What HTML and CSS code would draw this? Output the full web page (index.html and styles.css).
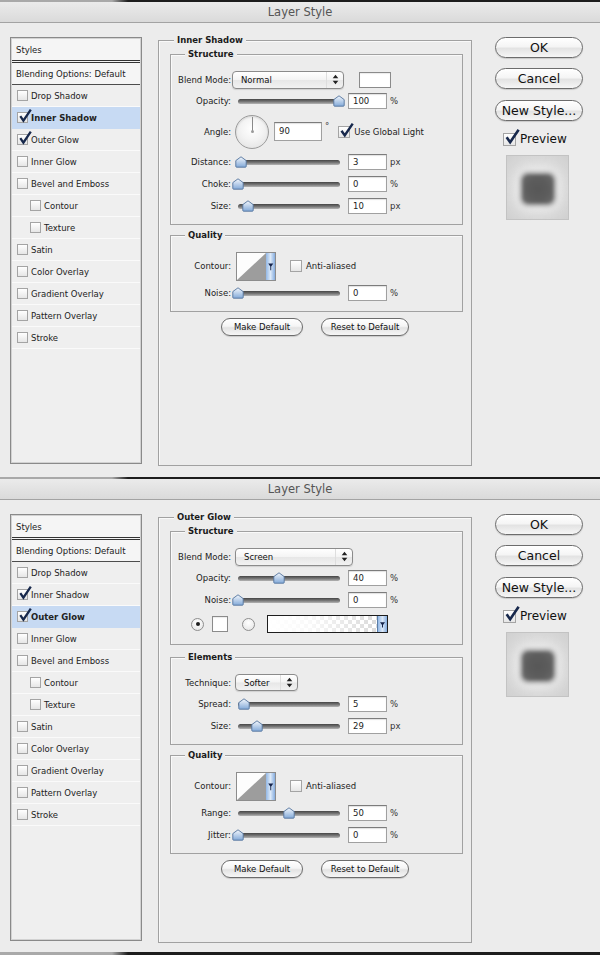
FILE: index.html
```html
<!DOCTYPE html>
<html lang="en">
<head>
<meta charset="utf-8">
<title>Layer Style</title>
<link rel="stylesheet" href="styles.css">
</head>
<body>
<svg class="defs" aria-hidden="true"><defs>
<linearGradient id="thumbg" x1="0" y1="0" x2="0" y2="1"><stop offset="0" stop-color="#f4f8fd"/><stop offset="1" stop-color="#82a9d8"/></linearGradient>
<linearGradient id="stripg" x1="0" y1="0" x2="1" y2="0"><stop offset="0" stop-color="#93b8e6"/><stop offset=".5" stop-color="#dce9f8"/><stop offset="1" stop-color="#86addf"/></linearGradient>
</defs></svg>

<!-- ============ DIALOG 1 : INNER SHADOW ============ -->
<div class="dialog">
  <div class="topline"></div>
  <div class="titlebar">Layer Style</div>
  <div class="body">
    <div class="sidebar">
      <div class="hdr styles">Styles</div>
      <div class="hdr blend">Blending Options: Default</div>
      <div class="item"><span class="cb"></span>Drop Shadow</div>
      <div class="item sel"><span class="cb"><svg class="ck" viewBox="0 0 14 14"><path d="M2.3 7.2 5.4 11.6 12.8 .6"/></svg></span>Inner Shadow</div>
      <div class="item"><span class="cb"><svg class="ck" viewBox="0 0 14 14"><path d="M2.3 7.2 5.4 11.6 12.8 .6"/></svg></span>Outer Glow</div>
      <div class="item"><span class="cb"></span>Inner Glow</div>
      <div class="item"><span class="cb"></span>Bevel and Emboss</div>
      <div class="item sub"><span class="cb"></span>Contour</div>
      <div class="item sub"><span class="cb"></span>Texture</div>
      <div class="item"><span class="cb"></span>Satin</div>
      <div class="item"><span class="cb"></span>Color Overlay</div>
      <div class="item"><span class="cb"></span>Gradient Overlay</div>
      <div class="item"><span class="cb"></span>Pattern Overlay</div>
      <div class="item"><span class="cb"></span>Stroke</div>
    </div>

    <div class="group outer">
      <div class="gtitle">Inner Shadow</div>
      <div class="group inner first">
        <div class="gtitle">Structure</div>
        <div class="rows">
          <div class="row r21">
            <span class="lbl">Blend Mode:</span>
            <span class="select blend1"><span class="val">Normal</span><span class="arr"><svg viewBox="0 0 7 11" width="7" height="11"><path d="M3.5 .8 6.3 4.3H.7Z M.7 6.7H6.3L3.5 10.2Z"/></svg></span></span>
            <span class="swatch"></span>
          </div>
          <div class="row">
            <span class="lbl">Opacity:</span>
            <span class="slider"><span class="track"></span><svg class="thumb" viewBox="0 0 12 12" style="left:101px"><path d="M6 .8 11.2 4.6V10.4Q11.2 11.2 10.4 11.2H1.6Q.8 11.2 .8 10.4V4.6Z"/></svg></span>
            <span class="num">100</span><span class="unit">%</span>
          </div>
          <div class="row r39">
            <span class="lbl">Angle:</span>
            <span class="dial"></span>
            <span class="num wide">90</span><span class="deg">°</span>
            <span class="cb big gl"><svg class="ck" viewBox="0 0 14 14"><path d="M2.3 7.2 5.4 11.6 12.8 .6"/></svg></span>
            <span class="cblabel">Use Global Light</span>
          </div>
          <div class="row">
            <span class="lbl">Distance:</span>
            <span class="slider"><span class="track"></span><svg class="thumb" viewBox="0 0 12 12" style="left:3px"><path d="M6 .8 11.2 4.6V10.4Q11.2 11.2 10.4 11.2H1.6Q.8 11.2 .8 10.4V4.6Z"/></svg></span>
            <span class="num">3</span><span class="unit">px</span>
          </div>
          <div class="row">
            <span class="lbl">Choke:</span>
            <span class="slider"><span class="track"></span><svg class="thumb" viewBox="0 0 12 12" style="left:0px"><path d="M6 .8 11.2 4.6V10.4Q11.2 11.2 10.4 11.2H1.6Q.8 11.2 .8 10.4V4.6Z"/></svg></span>
            <span class="num">0</span><span class="unit">%</span>
          </div>
          <div class="row">
            <span class="lbl">Size:</span>
            <span class="slider"><span class="track"></span><svg class="thumb" viewBox="0 0 12 12" style="left:10px"><path d="M6 .8 11.2 4.6V10.4Q11.2 11.2 10.4 11.2H1.6Q.8 11.2 .8 10.4V4.6Z"/></svg></span>
            <span class="num">10</span><span class="unit">px</span>
          </div>
        </div>
      </div>

      <div class="group inner mt10">
        <div class="gtitle">Quality</div>
        <div class="rows">
          <div class="row r32">
            <span class="lbl">Contour:</span>
            <svg class="contour" viewBox="0 0 40 29" width="40" height="29"><rect x=".5" y=".5" width="39" height="28" fill="#fdfdfd" stroke="#8c8c8c"/><path d="M1 28 30 1V28Z" fill="#9d9d9d"/><rect x="30" y="1" width="9" height="27" fill="url(#stripg)"/><path d="M32.2 11.6H37.3L35.2 14.6V18.2H34.3V14.6Z" fill="#14234a"/></svg>
            <span class="cb big aa"></span>
            <span class="cblabel">Anti-aliased</span>
          </div>
          <div class="row">
            <span class="lbl">Noise:</span>
            <span class="slider"><span class="track"></span><svg class="thumb" viewBox="0 0 12 12" style="left:0px"><path d="M6 .8 11.2 4.6V10.4Q11.2 11.2 10.4 11.2H1.6Q.8 11.2 .8 10.4V4.6Z"/></svg></span>
            <span class="num">0</span><span class="unit">%</span>
          </div>
        </div>
      </div>

      <div class="btnrow">
        <span class="pill sm md">Make Default</span>
        <span class="pill sm rd">Reset to Default</span>
      </div>
    </div>

    <div class="side">
      <span class="pill">OK</span>
      <span class="pill">Cancel</span>
      <span class="pill">New Style...</span>
      <div class="prevrow"><span class="cb big pv"><svg class="ck" viewBox="0 0 14 14"><path d="M2.3 7.2 5.4 11.6 12.8 .6"/></svg></span><span>Preview</span></div>
      <div class="preview"><span class="sq"></span></div>
    </div>
  </div>
</div>

<!-- ============ DIALOG 2 : OUTER GLOW ============ -->
<div class="dialog d2">
  <div class="topline"></div>
  <div class="titlebar">Layer Style</div>
  <div class="body">
    <div class="sidebar">
      <div class="hdr styles">Styles</div>
      <div class="hdr blend">Blending Options: Default</div>
      <div class="item"><span class="cb"></span>Drop Shadow</div>
      <div class="item"><span class="cb"><svg class="ck" viewBox="0 0 14 14"><path d="M2.3 7.2 5.4 11.6 12.8 .6"/></svg></span>Inner Shadow</div>
      <div class="item sel"><span class="cb"><svg class="ck" viewBox="0 0 14 14"><path d="M2.3 7.2 5.4 11.6 12.8 .6"/></svg></span>Outer Glow</div>
      <div class="item"><span class="cb"></span>Inner Glow</div>
      <div class="item"><span class="cb"></span>Bevel and Emboss</div>
      <div class="item sub"><span class="cb"></span>Contour</div>
      <div class="item sub"><span class="cb"></span>Texture</div>
      <div class="item"><span class="cb"></span>Satin</div>
      <div class="item"><span class="cb"></span>Color Overlay</div>
      <div class="item"><span class="cb"></span>Gradient Overlay</div>
      <div class="item"><span class="cb"></span>Pattern Overlay</div>
      <div class="item"><span class="cb"></span>Stroke</div>
    </div>

    <div class="group outer">
      <div class="gtitle">Outer Glow</div>
      <div class="group inner first">
        <div class="gtitle">Structure</div>
        <div class="rows">
          <div class="row r21">
            <span class="lbl">Blend Mode:</span>
            <span class="select blend2"><span class="val">Screen</span><span class="arr"><svg viewBox="0 0 7 11" width="7" height="11"><path d="M3.5 .8 6.3 4.3H.7Z M.7 6.7H6.3L3.5 10.2Z"/></svg></span></span>
          </div>
          <div class="row">
            <span class="lbl">Opacity:</span>
            <span class="slider"><span class="track"></span><svg class="thumb" viewBox="0 0 12 12" style="left:41px"><path d="M6 .8 11.2 4.6V10.4Q11.2 11.2 10.4 11.2H1.6Q.8 11.2 .8 10.4V4.6Z"/></svg></span>
            <span class="num">40</span><span class="unit">%</span>
          </div>
          <div class="row">
            <span class="lbl">Noise:</span>
            <span class="slider"><span class="track"></span><svg class="thumb" viewBox="0 0 12 12" style="left:0px"><path d="M6 .8 11.2 4.6V10.4Q11.2 11.2 10.4 11.2H1.6Q.8 11.2 .8 10.4V4.6Z"/></svg></span>
            <span class="num">0</span><span class="unit">%</span>
          </div>
          <div class="row r26">
            <span class="radio on r1"></span>
            <span class="swatch small"></span>
            <span class="radio r2"></span>
            <span class="gpick"><span class="garr"><svg viewBox="0 0 7 8" width="7" height="8"><path d="M1 2.2H6L4 5V7.4H3V5Z"/></svg></span></span>
          </div>
        </div>
      </div>

      <div class="group inner mt12">
        <div class="gtitle">Elements</div>
        <div class="rows">
          <div class="row r21">
            <span class="lbl">Technique:</span>
            <span class="select tech"><span class="val">Softer</span><span class="arr"><svg viewBox="0 0 7 11" width="7" height="11"><path d="M3.5 .8 6.3 4.3H.7Z M.7 6.7H6.3L3.5 10.2Z"/></svg></span></span>
          </div>
          <div class="row">
            <span class="lbl">Spread:</span>
            <span class="slider"><span class="track"></span><svg class="thumb" viewBox="0 0 12 12" style="left:6px"><path d="M6 .8 11.2 4.6V10.4Q11.2 11.2 10.4 11.2H1.6Q.8 11.2 .8 10.4V4.6Z"/></svg></span>
            <span class="num">5</span><span class="unit">%</span>
          </div>
          <div class="row">
            <span class="lbl">Size:</span>
            <span class="slider"><span class="track"></span><svg class="thumb" viewBox="0 0 12 12" style="left:19px"><path d="M6 .8 11.2 4.6V10.4Q11.2 11.2 10.4 11.2H1.6Q.8 11.2 .8 10.4V4.6Z"/></svg></span>
            <span class="num">29</span><span class="unit">px</span>
          </div>
        </div>
      </div>

      <div class="group inner mt10">
        <div class="gtitle">Quality</div>
        <div class="rows">
          <div class="row r32">
            <span class="lbl">Contour:</span>
            <svg class="contour" viewBox="0 0 40 29" width="40" height="29"><rect x=".5" y=".5" width="39" height="28" fill="#fdfdfd" stroke="#8c8c8c"/><path d="M1 28 30 1V28Z" fill="#9d9d9d"/><rect x="30" y="1" width="9" height="27" fill="url(#stripg)"/><path d="M32.2 11.6H37.3L35.2 14.6V18.2H34.3V14.6Z" fill="#14234a"/></svg>
            <span class="cb big aa"></span>
            <span class="cblabel">Anti-aliased</span>
          </div>
          <div class="row">
            <span class="lbl">Range:</span>
            <span class="slider"><span class="track"></span><svg class="thumb" viewBox="0 0 12 12" style="left:51px"><path d="M6 .8 11.2 4.6V10.4Q11.2 11.2 10.4 11.2H1.6Q.8 11.2 .8 10.4V4.6Z"/></svg></span>
            <span class="num">50</span><span class="unit">%</span>
          </div>
          <div class="row">
            <span class="lbl">Jitter:</span>
            <span class="slider"><span class="track"></span><svg class="thumb" viewBox="0 0 12 12" style="left:0px"><path d="M6 .8 11.2 4.6V10.4Q11.2 11.2 10.4 11.2H1.6Q.8 11.2 .8 10.4V4.6Z"/></svg></span>
            <span class="num">0</span><span class="unit">%</span>
          </div>
        </div>
      </div>

      <div class="btnrow">
        <span class="pill sm md">Make Default</span>
        <span class="pill sm rd">Reset to Default</span>
      </div>
    </div>

    <div class="side">
      <span class="pill">OK</span>
      <span class="pill">Cancel</span>
      <span class="pill">New Style...</span>
      <div class="prevrow"><span class="cb big pv"><svg class="ck" viewBox="0 0 14 14"><path d="M2.3 7.2 5.4 11.6 12.8 .6"/></svg></span><span>Preview</span></div>
      <div class="preview"><span class="sq"></span></div>
    </div>
  </div>
</div>
<div class="topline next"></div>
</body>
</html>
```

FILE: styles.css
```css
* { box-sizing: border-box; margin: 0; padding: 0; }
html, body { background: #ececec; }
body {
  width: 600px; height: 955px; overflow: hidden;
  font-family: "DejaVu Sans", "Liberation Sans", sans-serif;
  font-size: 8.5px; color: #1e1e1e;
}
.defs { display: block; width: 0; height: 0; }

/* ---------- window ---------- */
.dialog { height: 477px; background: #ececec; }
.dialog.d2 { height: 475px; }
.topline {
  height: 2px;
  background: linear-gradient(to right, #a9a9a9 0, #a9a9a9 112px, #1d1d1d 128px, #1d1d1d 100%);
}
.topline.next { height: 3px; }
.titlebar {
  height: 21px; border-bottom: 1px solid #a3a3a3;
  background: linear-gradient(#ebebeb, #dadada);
  text-align: center; font-size: 11.5px; line-height: 20px; color: #555;
}
.body { display: flex; align-items: flex-start; padding: 14px 0 0 10px; }

/* ---------- left list ---------- */
.sidebar {
  flex: none; width: 132px; height: 427px; padding: 1px;
  border: 1px solid #8a8a8a; box-shadow: inset 0 0 0 1px #d2d2d2;
  background: #efefef;
}
.hdr { display: flex; align-items: center; padding-left: 4px; background: #f5f5f5; color: #222; }
.hdr.styles { height: 24px; border-bottom: 3px double #333; }
.hdr.blend { height: 22px; border-bottom: 1px solid #4d4d4d; }
.item {
  height: 22px; display: flex; align-items: center;
  padding-left: 5px; border-bottom: 1px solid #fafafa; color: #222;
}
.item.sub { padding-left: 18px; }
.item.sel { background: #c7daf3; font-weight: bold; border-bottom-color: #c7daf3; }

.cb {
  position: relative; flex: none; width: 11px; height: 11px; margin-right: 3px;
  border: 1px solid #a4a4a4; background: linear-gradient(#ffffff, #e6e6e6);
}
.cb.big { width: 12px; height: 12px; }
.ck {
  position: absolute; left: 0; top: -4px; width: 14px; height: 14px; overflow: visible;
  fill: none; stroke: #17284c; stroke-width: 2.3; stroke-linejoin: miter;
}
.cb.big .ck { left: 0; top: -4px; width: 15px; height: 15px; }

/* ---------- group boxes ---------- */
.group { border: 1px solid #a1a1a1; box-shadow: inset 1px 1px 0 #f9f9f9; }
.group.outer { flex: none; width: 314px; height: 426px; margin: 3px 0 0 16px; }
.gtitle {
  display: block; width: max-content; height: 12px; line-height: 12px;
  margin: -7px 0 0 14px; padding: 0 3px; background: #ececec;
  font-weight: bold; color: #1a1a1a;
}
.outer > .gtitle { margin-left: 15px; }
.group.inner { margin: 0 8px 0 11px; }
.group.inner.first { margin-top: 8px; }
.group.inner.mt10 { margin-top: 10px; }
.group.inner.mt12 { margin-top: 12px; }
.rows { padding: 9px 0 7px; }

.row { display: flex; align-items: center; height: 22px; }
.row.r21 { height: 21px; }
.row.r26 { height: 26px; }
.row.r32 { height: 32px; }
.row.r39 { height: 39px; }
.lbl { flex: none; width: 60px; text-align: right; color: #222; }

/* popup select */
.select {
  flex: none; display: flex; align-items: center; height: 18px;
  border: 1px solid #8b8b8b; border-radius: 4px;
  background: linear-gradient(#ffffff, #f4f4f4 48%, #e7e7e7 52%, #f2f2f2);
  box-shadow: 0 1px 1px rgba(0, 0, 0, .12);
}
.select .val { flex: 1; padding-left: 8px; color: #111; }
.select .arr {
  width: 17px; height: 100%; display: flex; align-items: center; justify-content: center;
  border-left: 1px solid #dedede;
}
.select .arr svg { fill: #222; }
.select.blend1 { width: 112px; margin-left: 1px; }
.select.blend2 { width: 118px; margin-left: 4px; }
.select.tech { width: 63px; height: 17px; margin-left: 4px; }

.swatch {
  flex: none; width: 32px; height: 16px; margin-left: 15px;
  border: 1px solid #8b8b8b; background: #fff; box-shadow: inset 0 1px 1px rgba(0, 0, 0, .08);
}
.swatch.small { width: 16px; height: 16px; margin-left: 8px; }

/* slider */
.slider {
  position: relative; flex: none; width: 114px; height: 14px; margin-left: 1px;
  display: flex; align-items: center; padding: 0 6px;
}
.track {
  flex: 1; height: 5px; border-radius: 3px;
  background: linear-gradient(#454545, #7a7a7a 55%, #b5b5b5);
}
.thumb {
  position: absolute; top: 1px; width: 12px; height: 12px; overflow: visible;
  fill: url(#thumbg); stroke: #52739c; stroke-width: .9;
}

/* numeric field */
.num {
  flex: none; width: 39px; height: 16px; margin-left: 2px; padding-left: 4px;
  border: 1px solid #a0a0a0; border-top-color: #7c7c7c; background: #fff;
  box-shadow: inset 0 1px 1px rgba(0, 0, 0, .12);
  line-height: 14px; color: #222;
}
.num.wide { width: 48px; height: 19px; margin-left: 5px; line-height: 17px; }
.unit { margin-left: 3px; color: #333; }
.deg { align-self: flex-start; margin: 9px 0 0 3px; line-height: 10px; color: #333; }

/* angle dial */
.dial {
  position: relative; flex: none; width: 34px; height: 34px; margin-left: 4px;
  border: 1px solid #9b9b9b; border-radius: 50%;
  background: radial-gradient(circle at 50% 40%, #ffffff, #f3f3f3 45%, #dedede 100%);
  box-shadow: inset 0 1px 2px rgba(0, 0, 0, .12);
}
.dial::before {
  content: ""; position: absolute; left: 15.5px; top: 1px; width: 1px; height: 15px; background: #8a8a8a;
}
.dial::after {
  content: ""; position: absolute; left: 14.5px; top: 14.5px; width: 3px; height: 3px;
  border-radius: 50%; background: #9a9a9a;
}
.cb.gl { margin: 0 0 0 9px; }
.cb.aa { margin: 0 0 0 14px; }
.cblabel { margin-left: 4px; color: #222; }

/* contour picker */
.contour { flex: none; margin-left: 5px; }

/* radio + gradient */
.radio {
  flex: none; width: 13px; height: 13px; border-radius: 50%;
  border: 1px solid #8e8e8e;
  background: radial-gradient(circle at 50% 35%, #ffffff, #e2e2e2);
  display: flex; align-items: center; justify-content: center;
}
.radio.on::after { content: ""; width: 4px; height: 4px; border-radius: 50%; background: #1e1e1e; }
.radio.r1 { margin-left: 20px; }
.radio.r2 { margin-left: 14px; }
.gpick {
  flex: none; display: flex; justify-content: flex-end; width: 121px; height: 18px; margin-left: 12px;
  border: 1px solid #1e1e1e;
  background:
    linear-gradient(to right, #ffffff 0%, rgba(255, 255, 255, .85) 35%, rgba(255, 255, 255, 0) 100%),
    repeating-conic-gradient(#d6d6d6 0 25%, #ffffff 0 50%) 0 0 / 8px 8px;
}
.garr {
  width: 10px; height: 100%; display: flex; align-items: center; justify-content: center;
  border-left: 1px solid #5a7ea8;
  background: linear-gradient(to right, #93b8e6, #dce9f8, #86addf);
}
.garr svg { fill: #14234a; }

/* buttons */
.pill {
  display: flex; align-items: center; justify-content: center; height: 21px;
  border: 1px solid #6c6c6c; border-radius: 11px;
  background: linear-gradient(#ffffff, #f5f5f5 45%, #e3e3e3 55%, #f6f6f6);
  box-shadow: inset 0 1px 0 #ffffff, 0 1px 1px rgba(0, 0, 0, .15);
  font-size: 12.5px; color: #111;
}
.side { flex: none; width: 88px; margin-left: 23px; }
.side .pill + .pill { margin-top: 10px; }
.side .pill:nth-child(3) { margin-top: 11px; }
.btnrow { display: flex; justify-content: center; gap: 18px; margin-top: 6px; }
.pill.sm { height: 18px; border-radius: 9px; font-size: 8.5px; }
.pill.md { width: 82px; }
.pill.rd { width: 88px; }

.prevrow {
  display: flex; align-items: center; height: 18px; margin-top: 9px; padding-left: 8px;
  font-size: 12px; color: #111;
}
.cb.pv { width: 13px; height: 13px; margin-right: 4px; }
.cb.pv .ck { width: 16px; height: 16px; top: -5px; }
.preview {
  width: 63px; height: 65px; margin: 7px 0 0 11px;
  border: 1px solid #c3c3c3;
  background: radial-gradient(circle, #e8e8e8 0, #dedede 45%, #d0d0d0 100%);
  display: flex; align-items: center; justify-content: center;
}
.preview .sq {
  width: 30px; height: 28px; margin-top: 3px; border-radius: 5px;
  background: radial-gradient(circle, #575757 0, #5c5c5c 50%, #6c6c6c 100%);
  box-shadow: 0 0 4px 2px #707070, 0 0 12px 6px rgba(246, 246, 246, .75);
  filter: blur(1.4px);
}
```
